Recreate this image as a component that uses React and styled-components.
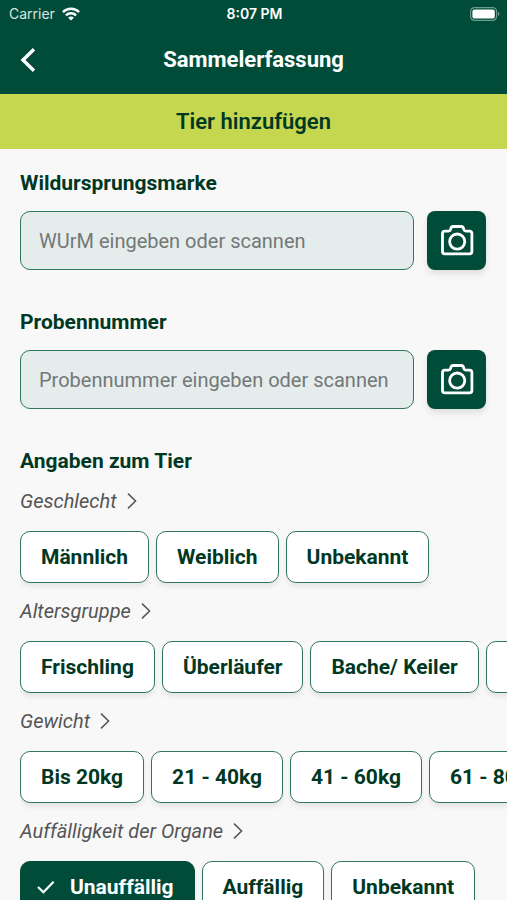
import React, { useState } from 'react';
import styled, { createGlobalStyle } from 'styled-components';

const GlobalStyle = createGlobalStyle`
  * {
    box-sizing: border-box;
  }

  body {
    margin: 0;
    background-color: #f8f8f8;
    color: #003824;
    font-family: Roboto, "Liberation Sans", sans-serif;
  }

  button,
  input {
    font-family: inherit;
  }
`;

const TopBar = styled.header`
  background-color: #004c39;
  color: #fff;
`;

const StatusBar = styled.div`
  display: grid;
  grid-template-columns: 1fr auto 1fr;
  align-items: center;
  height: 27px;
  padding: 0 7px 0 9px;
  font-family: Inter, Roboto, sans-serif;
  font-size: 14px;
`;

const Carrier = styled.span`
  display: flex;
  align-items: center;
  gap: 7px;
  color: #d9e4e1;
`;

const Time = styled.span`
  font-weight: 600;
`;

const Battery = styled.span`
  display: flex;
  justify-content: flex-end;
`;

const NavBar = styled.div`
  display: grid;
  grid-template-columns: 36px 1fr 36px;
  align-items: center;
  height: 67px;
  padding: 0 10px 1px;
`;

const BackButton = styled.button`
  display: flex;
  justify-content: center;
  padding: 6px;
  border: none;
  background: none;
  color: #fff;
  cursor: pointer;
`;

const Title = styled.h1`
  margin: 0;
  font-size: 22px;
  font-weight: 700;
  line-height: 28px;
  text-align: center;
`;

const AddButton = styled.button`
  display: block;
  width: 100%;
  height: 55px;
  padding: 0;
  border: none;
  background-color: #c5d64f;
  color: #003824;
  font-size: 22px;
  font-weight: 600;
  cursor: pointer;
`;

const Form = styled.main`
  padding: 22px 0 20px 20px;
`;

const Field = styled.div`
  margin-bottom: 40px;
  padding-right: 21px;
`;

const Label = styled.label`
  display: block;
  margin-bottom: 16px;
  font-size: 21px;
  font-weight: 700;
  line-height: 24px;
`;

const InputRow = styled.div`
  display: flex;
  gap: 13px;
`;

const TextInput = styled.input`
  flex: 1;
  min-width: 0;
  height: 59px;
  padding: 0 18px;
  border: 1px solid #2f7560;
  border-radius: 10px;
  background-color: #e5ecec;
  color: #003824;
  font-size: 20px;

  &::placeholder {
    color: #737878;
    opacity: 1;
  }
`;

const ScanButton = styled.button`
  display: flex;
  align-items: center;
  justify-content: center;
  width: 59px;
  height: 59px;
  padding: 0;
  border: none;
  border-radius: 8px;
  background-color: #004c39;
  color: #fff;
  box-shadow: 0 4px 6px rgba(0, 0, 0, 0.1);
  cursor: pointer;
`;

const SectionTitle = styled.h2`
  margin: 0 0 16px;
  font-size: 21px;
  font-weight: 700;
  line-height: 24px;
`;

const Group = styled.fieldset`
  min-width: 0;
  margin: 0 0 6px;
  padding: 0;
  border: none;
`;

const GroupLabel = styled.legend`
  display: flex;
  align-items: center;
  gap: 10px;
  margin-bottom: 18px;
  padding: 0;
  color: #555;
  font-size: 20px;
  font-style: italic;
  line-height: 24px;
`;

// bottom padding leaves room for the chip shadow inside the scroll area
const ChipRow = styled.div`
  display: flex;
  gap: 7px;
  padding-bottom: 10px;
  overflow-x: auto;
  scrollbar-width: none;
`;

const Chip = styled.button`
  display: flex;
  flex-shrink: 0;
  align-items: center;
  gap: 14px;
  height: 52px;
  padding: 0 20px 0 ${(props) => (props.$active ? '15px' : '20px')};
  border: 1px solid ${(props) => (props.$active ? '#004c39' : '#2f7560')};
  border-radius: 10px;
  background-color: ${(props) => (props.$active ? '#004c39' : '#fff')};
  color: ${(props) => (props.$active ? '#fff' : '#003824')};
  font-size: 21px;
  font-weight: 700;
  white-space: nowrap;
  box-shadow: 0 4px 5px rgba(0, 0, 0, 0.07);
  cursor: pointer;
`;

const WifiIcon = () => (
  <svg width="18" height="14" viewBox="0 0 18 14" fill="none" stroke="#fff" strokeWidth="2.4" aria-hidden="true">
    <path d="M0.9 5.1C5.4 0.7 12.6 0.7 17.1 5.1" />
    <path d="M3.9 8.3C6.8 5.5 11.2 5.5 14.1 8.3" />
    <path d="M9 13.6L6.1 10.7C7.7 9.2 10.3 9.2 11.9 10.7Z" fill="#fff" stroke="none" />
  </svg>
);

const BatteryIcon = () => (
  <svg width="30" height="14" viewBox="0 0 30 14" aria-hidden="true">
    <rect x="0.6" y="0.6" width="26" height="12.8" rx="4" fill="none" stroke="#6f9b8f" strokeWidth="1.2" />
    <rect x="2.4" y="2.4" width="22.4" height="9.2" rx="2.2" fill="#fff" />
    <path d="M28 4.8C29.8 5.4 29.8 8.6 28 9.2Z" fill="#6f9b8f" />
  </svg>
);

const BackIcon = () => (
  <svg width="16" height="24" viewBox="0 0 16 24" fill="none" stroke="currentColor" strokeWidth="3.4" aria-hidden="true">
    <path d="M14 1.2L3 12L14 22.8" />
  </svg>
);

const CameraIcon = () => (
  <svg width="35" height="31" viewBox="0 0 35 31" fill="none" stroke="currentColor" strokeWidth="2.8" strokeLinejoin="round" aria-hidden="true">
    <path d="M5.9 6.2H9.6C10.6 6.2 11.2 5.7 11.5 4.7L11.8 3.5C12.2 2.1 13 1.5 14.2 1.5H22.2C23.4 1.5 24.2 2.1 24.6 3.5L24.9 4.7C25.2 5.7 25.8 6.2 26.8 6.2H30.5C32 6.2 32.9 7.1 32.9 8.6V26.4C32.9 27.9 32 28.8 30.5 28.8H5.9C4.4 28.8 3.5 27.9 3.5 26.4V8.6C3.5 7.1 4.4 6.2 5.9 6.2Z" />
    <circle cx="18.2" cy="16.6" r="7.6" />
  </svg>
);

const ArrowIcon = () => (
  <svg width="10" height="16" viewBox="0 0 10 16" fill="none" stroke="currentColor" strokeWidth="1.5" aria-hidden="true">
    <path d="M1 0.6L8.6 8L1 15.4" />
  </svg>
);

const CheckIcon = () => (
  <svg width="20" height="14" viewBox="0 0 20 14" fill="none" stroke="currentColor" strokeWidth="2.2" aria-hidden="true">
    <path d="M2 7L7.4 12.2L17.6 1.8" />
  </svg>
);

const fields = [
  { id: 'wurm', label: 'Wildursprungsmarke', placeholder: 'WUrM eingeben oder scannen' },
  { id: 'probe', label: 'Probennummer', placeholder: 'Probennummer eingeben oder scannen' },
];

const groups = [
  { id: 'geschlecht', label: 'Geschlecht', options: ['Männlich', 'Weiblich', 'Unbekannt'] },
  { id: 'alter', label: 'Altersgruppe', options: ['Frischling', 'Überläufer', 'Bache/ Keiler', 'Unbekannt'] },
  { id: 'gewicht', label: 'Gewicht', options: ['Bis 20kg', '21 - 40kg', '41 - 60kg', '61 - 80kg'] },
  { id: 'organe', label: 'Auffälligkeit der Organe', options: ['Unauffällig', 'Auffällig', 'Unbekannt'] },
];

const App = () => {
  const [selected, setSelected] = useState({ organe: 'Unauffällig' });

  const handleSelect = (group, option) => {
    setSelected({ ...selected, [group]: option });
  };

  return (
    <>
      <GlobalStyle />
      <TopBar>
        <StatusBar>
          <Carrier>
            Carrier
            <WifiIcon />
          </Carrier>
          <Time>8:07 PM</Time>
          <Battery>
            <BatteryIcon />
          </Battery>
        </StatusBar>
        <NavBar>
          <BackButton aria-label="Zurück">
            <BackIcon />
          </BackButton>
          <Title>Sammelerfassung</Title>
        </NavBar>
      </TopBar>
      <AddButton>Tier hinzufügen</AddButton>
      <Form>
        {fields.map((field) => (
          <Field key={field.id}>
            <Label htmlFor={field.id}>{field.label}</Label>
            <InputRow>
              <TextInput id={field.id} type="text" placeholder={field.placeholder} />
              <ScanButton aria-label={`${field.label} scannen`}>
                <CameraIcon />
              </ScanButton>
            </InputRow>
          </Field>
        ))}
        <SectionTitle>Angaben zum Tier</SectionTitle>
        {groups.map((group) => (
          <Group key={group.id}>
            <GroupLabel>
              {group.label}
              <ArrowIcon />
            </GroupLabel>
            <ChipRow>
              {group.options.map((option) => {
                const active = selected[group.id] === option;
                return (
                  <Chip
                    key={option}
                    type="button"
                    $active={active}
                    aria-pressed={active}
                    onClick={() => handleSelect(group.id, option)}
                  >
                    {active && <CheckIcon />}
                    {option}
                  </Chip>
                );
              })}
            </ChipRow>
          </Group>
        ))}
      </Form>
    </>
  );
};

export default App;
